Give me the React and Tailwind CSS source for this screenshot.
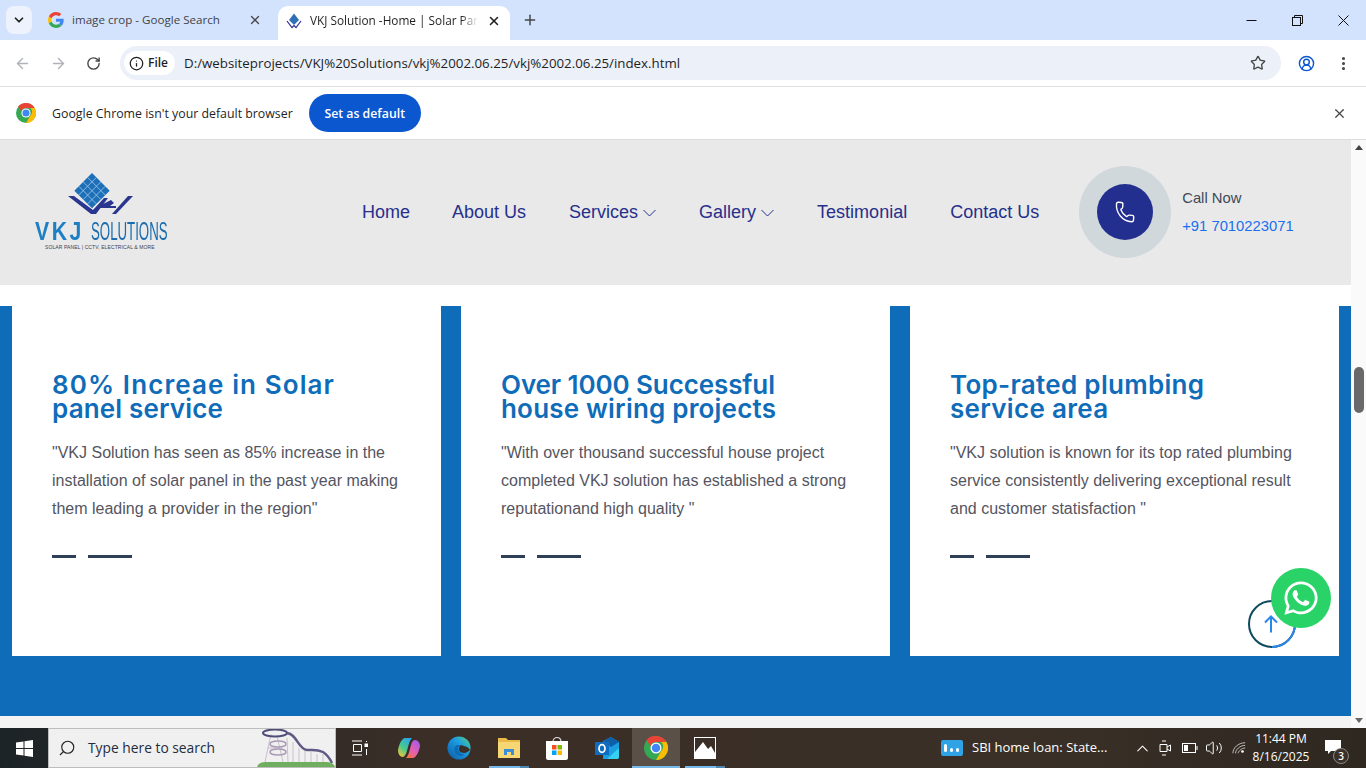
import { ChevronDown, ArrowLeft, ArrowRight, RotateCw, Info, Star, X, Plus, Phone, Search, ChevronUp, MoreVertical, CircleUserRound, Volume2 } from 'lucide-react';
import { FaWhatsapp } from 'react-icons/fa';

const cards = [
    {
        title: [
            { text: '80% Increae in Solar', cls: 'tracking-[1.1px]' },
            { text: 'panel service', cls: 'tracking-[0.15px]' },
        ],
        lines: ['"VKJ Solution has seen as 85% increase in the', 'installation of solar panel in the past year making', 'them leading a provider in the region"'],
    },
    {
        title: [
            { text: 'Over 1000 Successful', cls: 'tracking-[-0.1px]' },
            { text: 'house wiring projects', cls: 'tracking-[0.2px]' },
        ],
        lines: ['"With over thousand successful house project', 'completed VKJ solution has established a strong', 'reputationand high quality "'],
    },
    {
        title: [
            { text: 'Top-rated plumbing', cls: 'tracking-[0.3px]' },
            { text: 'service area', cls: 'tracking-[0.3px]' },
        ],
        lines: ['"VKJ solution is known for its top rated plumbing', 'service consistently delivering exceptional result', 'and customer statisfaction "'],
    },
];

function GoogleG() {
    return (
        <svg width="16" height="16" viewBox="0 0 48 48">
            <path fill="#EA4335" d="M24 9.5c3.5 0 6.700 1.200 9.200 3.600l6.900-6.900C35.900 2.400 30.400 0 24 0 14.600 0 6.500 5.400 2.600 13.200l8 6.200C12.500 13.700 17.800 9.500 24 9.500z" />
            <path fill="#4285F4" d="M47 24.500c0-1.600-.1-3.100-.4-4.500H24v9h13c-.6 3-2.300 5.500-4.800 7.200l7.700 6c4.500-4.200 7.100-10.300 7.100-17.700z" />
            <path fill="#FBBC05" d="M10.500 28.600c-.5-1.400-.8-3-.8-4.600s.3-3.200.8-4.600l-8-6.200C.9 16.400 0 20.100 0 24s.9 7.600 2.600 10.800l7.900-6.200z" />
            <path fill="#34A853" d="M24 48c6.500 0 11.900-2.100 15.900-5.800l-7.700-6c-2.200 1.400-4.900 2.300-8.200 2.300-6.200 0-11.500-4.200-13.400-9.900l-8 6.200C6.500 42.600 14.600 48 24 48z" />
        </svg>
    );
}

function ChromeLogo({ size = 20 }) {
    return (
        <svg width={size} height={size} viewBox="0 0 48 48">
            <circle cx="24" cy="24" r="24" fill="#34A853" />
            <path fill="#EA4335" d="M24 0a24 24 0 0 1 20.800 12H24a12 12 0 0 0-11.300 8L5 8A24 24 0 0 1 24 0z" />
            <path fill="#FBBC05" d="M44.800 12A24 24 0 0 1 24 48l10.400-18a12 12 0 0 0 0-18z" />
            <circle cx="24" cy="24" r="11" fill="#fff" />
            <circle cx="24" cy="24" r="8.500" fill="#4285F4" />
        </svg>
    );
}

function TabFavicon() {
    return (
        <svg width="16" height="16" viewBox="0 0 16 16">
            <path d="M8 0.500 L13 7 L8 12 L3 7 Z" fill="#2f6fb5" />
            <path d="M1 8 L6 14.500 L8 12.500 L10 14.500 L15 8" fill="none" stroke="#2a2f8f" strokeWidth="1.200" />
        </svg>
    );
}

function Logo() {
    return (
        <div className="flex w-[132px] flex-col">
            <svg width="68" height="43" viewBox="0 0 68 43" className="ml-[31px]">
                <g transform="translate(26 0) rotate(45 0 0)">
                    <rect x="0" y="0" width="25" height="25" fill="#1d6fb8" />
                    <path d="M6.250 0V25M12.500 0V25M18.750 0V25M0 6.250H25M0 12.500H25M0 18.750H25" stroke="#9cc6ea" strokeWidth="0.800" />
                </g>
                <path d="M2 23 H8 L27 37 L38 25 H42 L30 41 H25 Z" fill="#2a3590" />
                <path d="M35 32 L45 27 L48 30 L44 33 H50 V35 H34 Z" fill="#2a3590" />
                <path d="M46 41 L62 23 H67 L50 41 Z" fill="#2a3590" />
            </svg>
            <div className="mt-[4px] flex h-[22px] items-center font-['Liberation_Sans',sans-serif] leading-none">
                <div className="w-[56px]">
                    <div className="origin-left scale-x-[0.85] whitespace-nowrap text-[25px] font-bold tracking-[3px] text-[#1d7fc4]">VKJ</div>
                </div>
                <div className="w-[76px]">
                    <div className="origin-left scale-x-[0.53] whitespace-nowrap text-[25px] text-[#1a6cae]">SOLUTIONS</div>
                </div>
            </div>
            <div className="ml-[10px] mt-[2px] whitespace-nowrap font-['Liberation_Sans',sans-serif] text-[5px] leading-[6px] tracking-[0.1px] text-[#3b3f55]">SOLAR PANEL | CCTV, ELECTRICAL &amp; MORE</div>
        </div>
    );
}

function TabStrip() {
    return (
        <div className="flex h-10 items-start bg-[#d3e3fd] pl-[6px] pt-[6px] font-['Open_Sans',sans-serif]">
            <div className="flex h-[28px] w-[26px] items-center justify-center rounded-lg bg-[#edf2fc]">
                <ChevronDown size={14} strokeWidth={3} className="text-[#1f1f1f]" />
            </div>
            <div className="ml-[12px] flex h-[28px] w-[218px] items-center text-[11.6px] text-[#3f4348]">
                <span className="ml-[4px]"><GoogleG /></span>
                <span className="ml-[8px] flex-1 whitespace-nowrap">image crop - Google Search</span>
                <X size={14} strokeWidth={2.200} className="text-[#444746]" />
            </div>
            <div className="ml-[16px] flex h-[34px] w-[232px] items-center rounded-t-[10px] bg-white pb-[4px] text-[11.8px] text-[#1f1f1f]">
                <span className="ml-[8px]"><TabFavicon /></span>
                <span className="ml-[8px] w-[168px] overflow-hidden whitespace-nowrap [mask-image:linear-gradient(90deg,#000_90%,transparent)]">VKJ Solution -Home | Solar Panel Installation</span>
                <X size={14} strokeWidth={2.600} className="ml-[9px] text-[#1f1f1f]" />
            </div>
            <div className="ml-[12px] flex h-[28px] items-center">
                <Plus size={16} strokeWidth={2.200} className="text-[#444746]" />
            </div>
            <div className="ml-auto flex h-[28px] items-center">
                <svg width="11" height="11" viewBox="0 0 11 11" fill="none" stroke="#111" className="mr-[35px]">
                    <path d="M0.500 5.500H10.500" />
                </svg>
                <svg width="11" height="11" viewBox="0 0 11 11" fill="none" stroke="#111" className="mr-[35px]">
                    <rect x="0.500" y="2.500" width="8" height="8" />
                    <path d="M2.500 2.500V0.500H10.500V8.500H8.500" />
                </svg>
                <svg width="11" height="11" viewBox="0 0 11 11" fill="none" stroke="#111" className="mr-[17px]">
                    <path d="M0.500 0.500L10.500 10.500M10.500 0.500L0.500 10.500" />
                </svg>
            </div>
        </div>
    );
}

function Toolbar() {
    return (
        <div className="flex h-[47px] items-center rounded-t-[8px] border-b border-[#dfe1e5] bg-white pl-[14px] font-['Open_Sans',sans-serif]">
            <ArrowLeft size={17} strokeWidth={2} className="text-[#b0b3b8]" />
            <ArrowRight size={17} strokeWidth={2} className="ml-[19px] text-[#b0b3b8]" />
            <RotateCw size={15} strokeWidth={2.200} className="ml-[19px] text-[#444746]" />
            <div className="ml-[19px] flex h-[34px] w-[1161px] items-center rounded-full bg-[#ebf0f9] pl-[4px]">
                <div className="flex h-[24px] w-[51px] items-center rounded-full bg-white pl-[5px] text-[12px] font-semibold text-[#1f1f1f]">
                    <Info size={15} strokeWidth={2} />
                    <span className="ml-[4px]">File</span>
                </div>
                <span className="ml-[9px] flex-1 whitespace-nowrap pt-[1px] text-[13.3px] text-[#1f1f1f]">D:/websiteprojects/VKJ%20Solutions/vkj%2002.06.25/vkj%2002.06.25/index.html</span>
                <Star size={16} strokeWidth={2} className="mr-[15px] text-[#444746]" />
            </div>
            <CircleUserRound size={17} strokeWidth={2} className="ml-[17px] text-[#0b57d0]" />
            <MoreVertical size={17} strokeWidth={2.400} className="ml-[20px] text-[#444746]" />
        </div>
    );
}

function InfoBar() {
    return (
        <div className="flex h-[53px] items-center border-b border-[#dcdcdc] bg-white pl-[16px] font-['Open_Sans',sans-serif] shadow-[0_1px_2px_rgba(0,0,0,0.12)]">
            <ChromeLogo />
            <span className="ml-[16px] pt-[2px] text-[12.35px] text-[#1f1f1f]">Google Chrome isn't your default browser</span>
            <button className="ml-[16px] h-[38px] w-[112px] rounded-full bg-[#0b57d0] pt-[2px] text-[12.3px] font-semibold text-white">Set as default</button>
            <X size={15} strokeWidth={2} className="ml-auto mr-[19px] text-[#444746]" />
        </div>
    );
}

function NavItem({ label, caret, className }) {
    return (
        <a className={`flex items-center text-[18px] leading-none text-[#262f8c] ${className}`}>
            {label}
            {caret && (
                <svg width="13" height="8" viewBox="0 0 13 8" fill="none" stroke="currentColor" className="ml-[5px] mt-[2px]">
                    <path d="M0.500 1L6.500 7L12.500 1" />
                </svg>
            )}
        </a>
    );
}

function SiteHeader() {
    return (
        <header className="flex h-[145px] items-center bg-[#e9e9e9] pb-[2px] font-['Liberation_Sans',sans-serif]">
            <div className="ml-[35px] w-[132px] shrink-0"><Logo /></div>
            <nav className="ml-[195px] flex items-center">
                <NavItem label="Home" />
                <NavItem label="About Us" className="ml-[42px]" />
                <NavItem label="Services" caret className="ml-[43px]" />
                <NavItem label="Gallery" caret className="ml-[43px]" />
                <NavItem label="Testimonial" className="ml-[43px]" />
                <NavItem label="Contact Us" className="ml-[43px]" />
            </nav>
            <div className="ml-[40px] flex h-[92px] w-[92px] shrink-0 items-center justify-center rounded-full bg-[#d0d8db]">
                <div className="flex h-[56px] w-[56px] items-center justify-center rounded-full bg-[#232f8e]">
                    <Phone size={22} strokeWidth={1.500} className="rotate-[5deg] text-white" />
                </div>
            </div>
            <div className="ml-[11px] text-[14.8px] leading-[18px]">
                <div className="text-[#3d4a57]">Call Now</div>
                <div className="mt-[10px] text-[#1a6ff0]">+91 7010223071</div>
            </div>
        </header>
    );
}

function Card({ title, lines }) {
    return (
        <div className="h-[350px] w-[429px] bg-white pl-[40px] pt-[67px]">
            <h3 className="font-['Inter',sans-serif] text-[26px] font-semibold leading-[24px] text-[#0f6cb8]">
                {title.map((t) => (
                    <div key={t.text} className={t.cls}>{t.text}</div>
                ))}
            </h3>
            <div className="mt-[18px] font-['Liberation_Sans',sans-serif] text-[16px] leading-[28px] text-[#55555f]">
                {lines.map((l) => (
                    <div key={l} className="whitespace-nowrap">{l}</div>
                ))}
            </div>
            <div className="mt-[32px] flex gap-[12px]">
                <div className="h-[3px] w-[24px] bg-[#2e4057]" />
                <div className="h-[3px] w-[44px] bg-[#2e4057]" />
            </div>
        </div>
    );
}

function Scrollbar() {
    return (
        <div className="relative flex w-[15px] shrink-0 flex-col items-center justify-between bg-[#fafafa] py-[5px]">
            <div className="h-0 w-0 border-x-[4.500px] border-b-[5px] border-x-transparent border-b-[#444]" />
            <div className="absolute left-[3px] top-[227px] h-[46px] w-[10px] rounded-full bg-[#67696b]" />
            <div className="h-0 w-0 border-x-[4.500px] border-t-[5px] border-x-transparent border-t-[#666]" />
        </div>
    );
}

function Page() {
    return (
        <div className="relative flex h-[588px]">
            <div className="flex w-[1351px] flex-col bg-[#f3f3f3]">
                <SiteHeader />
                <div className="h-[21px] bg-white" />
                <section className="flex h-[410px] gap-[20px] bg-[#0f6cb8] pl-[12px]">
                    {cards.map((c) => (
                        <Card key={c.title[0].text} {...c} />
                    ))}
                </section>
            </div>
            <Scrollbar />
            <div className="absolute left-[1248px] top-[460px] flex h-[48px] w-[48px] items-center justify-center rounded-full border-2 border-[#0d4a5e]">
                <div className="absolute inset-[-2px] rotate-45 rounded-full border-2 border-transparent border-r-[#2a86e8]" />
                <svg width="14" height="18" viewBox="0 0 14 18" fill="none" stroke="#2a86e8" strokeWidth="2" className="-ml-[2px]">
                    <path d="M7 17.500V1.500M1 7.500L7 1.500L13 7.500" />
                </svg>
            </div>
            <div className="absolute left-[1271px] top-[428px] flex h-[60px] w-[60px] items-center justify-center rounded-full bg-[#29d367]">
                <FaWhatsapp size={38} className="text-white" />
            </div>
        </div>
    );
}

function CoasterArt() {
    return (
        <svg width="78" height="39" viewBox="0 0 78 39" className="absolute bottom-0 right-0">
            <path d="M8 34 L14 6 M20 8 L26 34 M30 10 L31 34 M36 14 L36 34 M42 20 L42 34 M48 22 L48 34 M54 24 L54 34 M60 26 L60 34 M66 26 L66 34 M10 20 L26 20" stroke="#cdbfd0" strokeWidth="1" fill="none" />
            <ellipse cx="18" cy="5" rx="12" ry="3.500" fill="none" stroke="#4f4c78" strokeWidth="2" />
            <ellipse cx="21" cy="16" rx="8" ry="3" fill="none" stroke="#a99cb5" strokeWidth="1.500" />
            <ellipse cx="21" cy="24" rx="8" ry="3" fill="none" stroke="#a99cb5" strokeWidth="1.500" />
            <path d="M30 5 C40 6 41 21 50 22 C56 22 60 21 66 24 C71 27 73 31 75 35" fill="none" stroke="#5e5a83" strokeWidth="2.500" />
            <path d="M0 39 C2 34 6 34 12 34 H70 C74 34 77 36 78 39 Z" fill="#6fae5f" />
        </svg>
    );
}

function Taskbar() {
    return (
        <div className="flex h-10 items-center bg-[linear-gradient(90deg,#1c2327_0%,#3a2e27_30%,#3a2f27_60%,#3a3028_75%,#2e2820_100%)] font-['Open_Sans',sans-serif] text-white">
            <div className="flex w-[48px] justify-center">
                <svg width="17" height="17" viewBox="0 0 17 17" fill="#fff">
                    <path d="M0 2.500 L7.500 1.400 V8 H0 Z M8.500 1.200 L17 0 V8 H8.500 Z M0 9 H7.500 V15.600 L0 14.500 Z M8.500 9 H17 V17 L8.500 15.800 Z" />
                </svg>
            </div>
            <div className="relative flex h-full w-[288px] items-center overflow-hidden border border-[#bdbdbd] bg-[#f0f0f0] pl-[9px] text-[13.8px] text-[#1f2d3d]">
                <Search size={18} strokeWidth={1.500} className="-scale-x-100 text-[#222]" />
                <span className="ml-[12px] pt-[1px]">Type here to search</span>
                <CoasterArt />
            </div>
            <svg width="18" height="16" viewBox="0 0 18 16" fill="none" stroke="#fff" className="ml-[15px]">
                <path d="M1 1H11M1 15H11M2.500 4.500H10.500V11.500H2.500Z" />
                <rect x="14" y="4" width="2.500" height="2.500" fill="#fff" />
                <path d="M15.500 1V2M15.500 9V15" />
            </svg>
            <svg width="22" height="22" viewBox="0 0 22 22" className="ml-[29px]">
                <defs>
                    <linearGradient id="copL" x1="0.8" y1="0" x2="0.2" y2="1">
                        <stop offset="0" stopColor="#2aa5ee" />
                        <stop offset="0.55" stopColor="#46c98f" />
                        <stop offset="1" stopColor="#f0c43a" />
                    </linearGradient>
                    <linearGradient id="copR" x1="0.8" y1="0" x2="0.2" y2="1">
                        <stop offset="0" stopColor="#a45ae6" />
                        <stop offset="0.6" stopColor="#e85fb0" />
                        <stop offset="1" stopColor="#f3743d" />
                    </linearGradient>
                </defs>
                <path d="M7 1H14C12 3 11 6 10 10C9 14 8 19 5 20C2 20 0 17 0 13C1 8 3 2 7 1Z" fill="url(#copL)" />
                <path d="M15 21H8C10 19 11 16 12 12C13 8 14 3 17 3C20 3 22 6 22 9C21 14 19 20 15 21Z" fill="url(#copR)" />
            </svg>
            <svg width="24" height="24" viewBox="0 0 26 26" className="ml-[27px]">
                <defs>
                    <linearGradient id="edge" x1="0" y1="1" x2="1" y2="0">
                        <stop offset="0" stopColor="#0c59a4" />
                        <stop offset="0.6" stopColor="#1b9de2" />
                        <stop offset="1" stopColor="#58d27a" />
                    </linearGradient>
                </defs>
                <circle cx="13" cy="13" r="12.500" fill="url(#edge)" />
                <path d="M14 10C19 10 24 13 25 15C23 18 19 19 16 18C13 17 12 15 14 10Z" fill="#3a2f27" />
                <path d="M8 14C8 10 11 9 14 10C10 12 12 20 19 20C16 23 8 22 8 14Z" fill="#0f6ab4" />
            </svg>
            <div className="relative ml-[18px] flex h-full w-[40px] items-center justify-center">
                <svg width="22" height="20" viewBox="0 0 22 20">
                    <path d="M0 0H8L10 2H22V20H0Z" fill="#e9b949" />
                    <path d="M0 4H22V20H0Z" fill="#f7d774" />
                    <path d="M6 17V11H16V17H13V14H9V17Z" fill="#3a8ed8" />
                </svg>
                <div className="absolute bottom-0 left-0 h-[2px] w-[31px] bg-[#76b9ed]" />
                <div className="absolute bottom-0 right-0 h-[2px] w-[9px] bg-[#4f86ad]" />
            </div>
            <svg width="22" height="24" viewBox="0 0 22 24" className="ml-[17px]">
                <path d="M7 6C7 0 15 0 15 6" fill="none" stroke="#ddd" strokeWidth="1.200" />
                <path d="M0 5H22V22C22 23 21 24 20 24H2C1 24 0 23 0 22Z" fill="#fff" />
                <rect x="6" y="9" width="4.500" height="4.500" fill="#f25022" />
                <rect x="11.500" y="9" width="4.500" height="4.500" fill="#7fba00" />
                <rect x="6" y="14.500" width="4.500" height="4.500" fill="#00a4ef" />
                <rect x="11.500" y="14.500" width="4.500" height="4.500" fill="#ffb900" />
            </svg>
            <svg width="24" height="22" viewBox="0 0 24 22" className="ml-[27px]">
                <path d="M8 4L16 0L24 5V20C24 21 23 22 22 22H8Z" fill="#1a9fe0" />
                <path d="M8 4L16 0L24 5L16 10Z" fill="#0f5ea8" />
                <path d="M12 22L24 11V20C24 21 23 22 22 22Z" fill="#36d0f5" />
                <rect x="0" y="5" width="14" height="13" fill="#0f6cc0" />
                <ellipse cx="7" cy="11.500" rx="3" ry="3.800" fill="none" stroke="#fff" strokeWidth="1.700" />
            </svg>
            <div className="relative ml-[13px] flex h-full w-[48px] items-center justify-center bg-[#5a5048]">
                <ChromeLogo size={24} />
                <div className="absolute bottom-0 left-0 h-[2px] w-full bg-[#76b9ed]" />
            </div>
            <div className="relative ml-[5px] flex h-full w-[40px] items-center justify-center">
                <svg width="22" height="22" viewBox="0 0 22 22">
                    <rect width="22" height="22" fill="#fff" />
                    <path d="M1 1H21V16L17 9L14 12L9 5L1 15Z" fill="#3a2f27" />
                </svg>
                <div className="absolute bottom-0 left-0 h-[2px] w-[31px] bg-[#76b9ed]" />
                <div className="absolute bottom-0 right-0 h-[2px] w-[9px] bg-[#4f86ad]" />
            </div>
            <svg width="22" height="16" viewBox="0 0 22 16" className="ml-[216px]">
                <rect width="22" height="16" rx="2" fill="#2fa3e6" />
                <rect x="3" y="4" width="3" height="8" rx="1.500" fill="#fff" />
                <rect x="9" y="8" width="3" height="4" rx="1.500" fill="#fff" />
                <rect x="15" y="8" width="3" height="4" rx="1.500" fill="#fff" />
            </svg>
            <span className="ml-[9px] w-[139px] whitespace-nowrap text-[13px]">SBI home loan: State...</span>
            <ChevronUp size={19} strokeWidth={1.300} className="ml-[22px]" />
            <svg width="12" height="16" viewBox="0 0 12 16" fill="none" stroke="#fff" className="ml-[7px]">
                <path d="M3 1H7M3 15H7M1 4.500H8V11.500H1ZM8 7L11.500 5V11L8 9" />
            </svg>
            <svg width="16" height="10" viewBox="0 0 16 10" fill="none" stroke="#fff" className="ml-[11px]">
                <rect x="0.500" y="0.500" width="13" height="9" />
                <rect x="2" y="2" width="4" height="6" fill="#fff" stroke="none" />
                <path d="M15 3V7" />
            </svg>
            <Volume2 size={18} strokeWidth={1.300} className="ml-[7px]" />
            <svg width="14" height="14" viewBox="0 0 16 14" fill="none" stroke="#cfcfcf" className="ml-[9px]">
                <path d="M1 13C1 7 7 1 15 1M4 13C4 9 9 4 15 4M7 13C7 11 11 7 15 7" />
                <circle cx="12" cy="11" r="1.500" fill="#fff" stroke="none" />
            </svg>
            <div className="ml-[5px] flex w-[60px] flex-col items-center text-[12px] leading-[18px]">
                <span className="-mt-[1px]">11:44 PM</span>
                <span>8/16/2025</span>
            </div>
            <div className="relative ml-[12px] h-full w-[30px]">
                <svg width="16" height="14" viewBox="0 0 16 14" className="absolute left-[2px] top-[12px]">
                    <path d="M0 0H16V11H6L3 14V11H0Z" fill="#fff" />
                </svg>
                <div className="absolute left-[10px] top-[20px] flex h-[16px] w-[16px] items-center justify-center rounded-full border border-[#888] bg-[#3a3028] text-[10px] font-semibold leading-none">3</div>
            </div>
        </div>
    );
}

export default function App() {
    return (
        <div className="h-[768px] w-[1366px] overflow-hidden">
            <TabStrip />
            <Toolbar />
            <InfoBar />
            <Page />
            <Taskbar />
        </div>
    );
}
